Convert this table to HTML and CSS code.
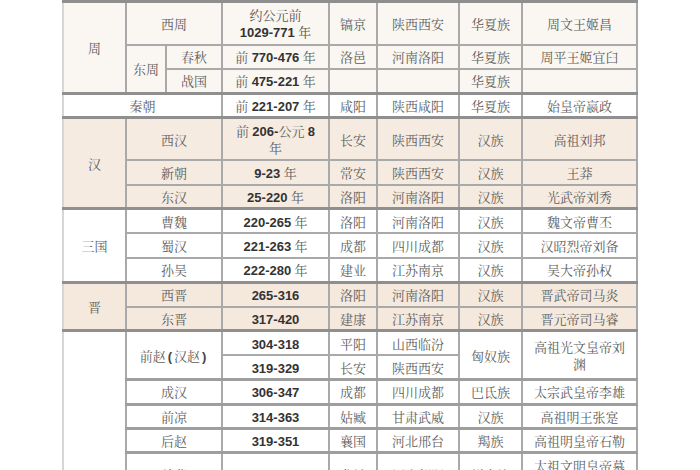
FILE: index.html
```html
<!DOCTYPE html>
<html lang="zh-CN">
<head>
<meta charset="utf-8">
<title>中国历代朝代表</title>
<link rel="stylesheet" href="styles.css">
</head>
<body>
<table class="dyn">
  <colgroup>
    <col class="c1"><col class="c2"><col class="c3"><col class="c4">
    <col class="c5"><col class="c6"><col class="c7"><col class="c8">
  </colgroup>
  <tbody>
    <tr class="prev">
      <td class="edge" colspan="3">商</td><td>约公元前 <span class="num">1600-1046</span> 年</td><td>亳</td><td>河南商丘</td><td>华夏族</td><td>商汤</td>
    </tr>
    <tr class="zhou grp two tall">
      <td class="edge" rowspan="3">周</td><td colspan="2">西周</td><td class="sans">约公元前<br><span class="num">1029-771</span> 年</td><td>镐京</td><td>陕西西安</td><td>华夏族</td><td>周文王姬昌</td>
    </tr>
    <tr class="zhou">
      <td rowspan="2">东周</td><td>春秋</td><td>前 <span class="num">770-476</span> 年</td><td>洛邑</td><td>河南洛阳</td><td>华夏族</td><td>周平王姬宜臼</td>
    </tr>
    <tr class="zhou">
      <td>战国</td><td>前 <span class="num">475-221</span> 年</td><td></td><td></td><td>华夏族</td><td></td>
    </tr>
    <tr class="grp">
      <td class="edge" colspan="3">秦朝</td><td>前 <span class="num">221-207</span> 年</td><td>咸阳</td><td>陕西咸阳</td><td>华夏族</td><td>始皇帝嬴政</td>
    </tr>
    <tr class="han grp two">
      <td class="edge" rowspan="3">汉</td><td colspan="2">西汉</td><td>前 <span class="num">206-</span>公元 <span class="num">8</span><br>年</td><td>长安</td><td>陕西西安</td><td>汉族</td><td>高祖刘邦</td>
    </tr>
    <tr class="han">
      <td colspan="2">新朝</td><td><span class="num">9-23</span> 年</td><td>常安</td><td>陕西西安</td><td>汉族</td><td>王莽</td>
    </tr>
    <tr class="han">
      <td colspan="2">东汉</td><td><span class="num">25-220</span> 年</td><td>洛阳</td><td>河南洛阳</td><td>汉族</td><td>光武帝刘秀</td>
    </tr>
    <tr class="grp">
      <td class="edge" rowspan="3">三国</td><td colspan="2">曹魏</td><td><span class="num">220-265</span> 年</td><td>洛阳</td><td>河南洛阳</td><td>汉族</td><td>魏文帝曹丕</td>
    </tr>
    <tr>
      <td colspan="2">蜀汉</td><td><span class="num">221-263</span> 年</td><td>成都</td><td>四川成都</td><td>汉族</td><td>汉昭烈帝刘备</td>
    </tr>
    <tr>
      <td colspan="2">孙吴</td><td><span class="num">222-280</span> 年</td><td>建业</td><td>江苏南京</td><td>汉族</td><td>吴大帝孙权</td>
    </tr>
    <tr class="jin grp">
      <td class="edge" rowspan="2">晋</td><td colspan="2">西晋</td><td><span class="num">265-316</span></td><td>洛阳</td><td>河南洛阳</td><td>汉族</td><td>晋武帝司马炎</td>
    </tr>
    <tr class="jin">
      <td colspan="2">东晋</td><td><span class="num">317-420</span></td><td>建康</td><td>江苏南京</td><td>汉族</td><td>晋元帝司马睿</td>
    </tr>
    <tr class="grp">
      <td class="edge lite" rowspan="12">十六国</td><td colspan="2" rowspan="2">前赵<b class="par">(</b>汉赵<b class="par">)</b></td><td><span class="num">304-318</span></td><td>平阳</td><td>山西临汾</td><td rowspan="2">匈奴族</td><td rowspan="2">高祖光文皇帝刘<br>渊</td>
    </tr>
    <tr>
      <td><span class="num">319-329</span></td><td>长安</td><td>陕西西安</td>
    </tr>
    <tr class="mid">
      <td colspan="2">成汉</td><td><span class="num">306-347</span></td><td>成都</td><td>四川成都</td><td>巴氐族</td><td>太宗武皇帝李雄</td>
    </tr>
    <tr class="mid">
      <td colspan="2">前凉</td><td><span class="num">314-363</span></td><td>姑臧</td><td>甘肃武威</td><td>汉族</td><td>高祖明王张寔</td>
    </tr>
    <tr class="mid">
      <td colspan="2">后赵</td><td><span class="num">319-351</span></td><td>襄国</td><td>河北邢台</td><td>羯族</td><td>高祖明皇帝石勒</td>
    </tr>
    <tr class="mid two">
      <td colspan="2">前燕</td><td><span class="num">337-370</span></td><td>龙城</td><td>辽宁朝阳</td><td>鲜卑族</td><td>太祖文明皇帝慕<br>容皝</td>
    </tr>
    <tr class="mid two">
      <td colspan="2">前秦</td><td><span class="num">350-394</span></td><td>长安</td><td>陕西西安</td><td>氐族</td><td>高祖景明皇帝苻<br>健</td>
    </tr>
    <tr class="mid two">
      <td colspan="2">后燕</td><td><span class="num">384-407</span></td><td>中山</td><td>河北定州</td><td>鲜卑族</td><td>世祖成武皇帝慕<br>容垂</td>
    </tr>
    <tr class="mid two">
      <td colspan="2">后秦</td><td><span class="num">384-417</span></td><td>长安</td><td>陕西西安</td><td>羌族</td><td>太祖武昭皇帝姚<br>苌</td>
    </tr>
    <tr class="mid two">
      <td colspan="2">西秦</td><td><span class="num">385-431</span></td><td>苑川</td><td>甘肃榆中</td><td>鲜卑族</td><td>烈祖宣烈王乞伏<br>国仁</td>
    </tr>
    <tr class="mid two">
      <td colspan="2">后凉</td><td><span class="num">386-403</span></td><td>姑臧</td><td>甘肃武威</td><td>氐族</td><td>太祖懿武皇帝吕<br>光</td>
    </tr>
    <tr class="mid two">
      <td colspan="2">南凉</td><td><span class="num">397-414</span></td><td>乐都</td><td>青海乐都</td><td>鲜卑族</td><td>烈祖武王秃发乌<br>孤</td>
    </tr>
  </tbody>
</table>
</body>
</html>
```

FILE: styles.css
```css
html, body {
  margin: 0;
  padding: 0;
  background: #ffffff;
}

body {
  overflow: hidden;
}

.dyn {
  border-collapse: collapse;
  table-layout: fixed;
  width: 574px;
  margin: -32px auto 0;
  font-family: "Noto Serif CJK SC", "Noto Sans CJK SC", serif;
  font-size: 13px;
  color: #5e5e5e;
}

.c1 { width: 63px; }
.c2 { width: 40px; }
.c3 { width: 56px; }
.c4 { width: 107px; }
.c5 { width: 48px; }
.c6 { width: 82px; }
.c7 { width: 63px; }
.c8 { width: 115px; }

.dyn tr {
  height: 24.4px;
}

.dyn tr.two {
  height: 42.5px;
}

.dyn tr.tall {
  height: 43.5px;
}

.dyn tr.prev {
  height: 32px;
}

.dyn td {
  border: 2px solid #a9a9a9;
  padding: 0 4px;
  line-height: 17px;
  text-align: center;
  vertical-align: middle;
  white-space: nowrap;
  overflow: hidden;
}

.grp td {
  border-top: 3px solid #8f8f8f;
}

.mid td {
  border-top: 3px solid #9e9e9e;
}

.dyn td.edge {
  border-left: 2px solid #d6d6d6;
}

.zhou td { background: #faf6f1; }
.han td  { background: #f6ebe0; }
.jin td  { background: #f5e8dc; }

.num {
  font-family: "Liberation Sans", Arial, sans-serif;
  font-weight: bold;
  color: #333333;
  line-height: 10px;
}

.sans {
  color: #555555;
}

.par {
  font-family: "Liberation Sans", Arial, sans-serif;
  font-weight: bold;
  color: #444444;
  margin: 0 2px;
  line-height: 10px;
}
```
